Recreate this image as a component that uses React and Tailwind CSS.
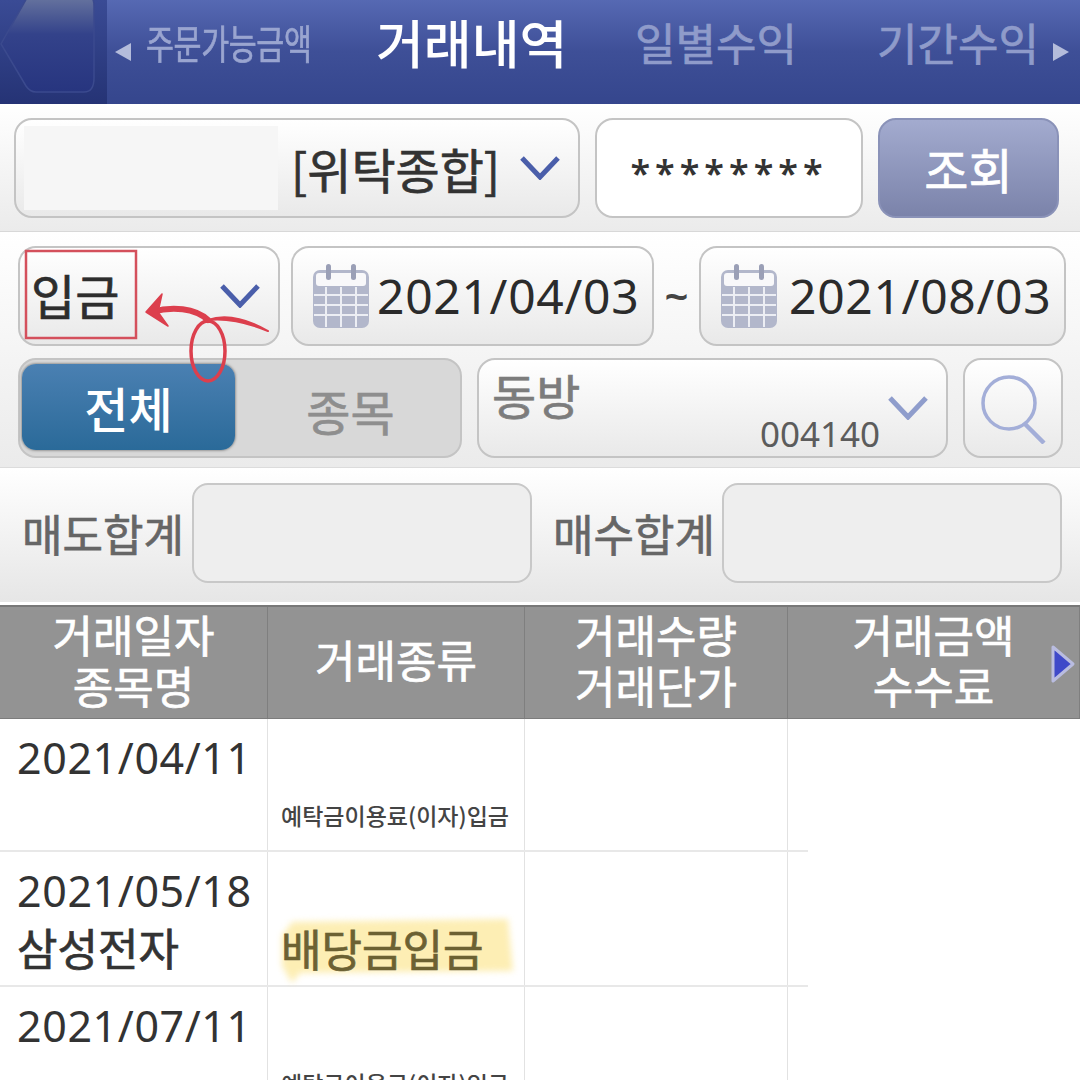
import { useId } from "react";

const KR = "font-['Noto_Sans_CJK_KR','Noto_Sans',sans-serif]";
const NUM = "font-['Noto_Sans','Noto_Sans_CJK_KR',sans-serif]";
const THICK = "[-webkit-text-stroke-width:0.7px]";

const box =
  "rounded-[18px] border-2 border-[#c4c4c4] bg-gradient-to-b from-white to-[#e9e9e9]";

const Chevron = ({ color = "#4a5eaa", w = 40, h = 24 }) => (
  <svg width={w} height={h} viewBox="0 0 40 24" fill="none" className="shrink-0">
    <path d="M2 2 L20 21 L38 2" stroke={color} strokeWidth="5" />
  </svg>
);

const Calendar = () => (
  <svg width="58" height="66" viewBox="0 0 58 66" className="shrink-0">
    <rect x="1" y="7" width="56" height="58" rx="7" fill="#b2b7cb" />
    <rect x="4" y="10" width="50" height="13" rx="3" fill="#f8f8fa" />
    <rect x="14" y="1" width="5" height="16" rx="2.5" fill="#9a9fb6" />
    <rect x="39" y="1" width="5" height="16" rx="2.5" fill="#9a9fb6" />
    <path
      d="M2 32 H56 M2 42 H56 M2 52 H56 M14 24 V64 M29 24 V64 M44 24 V64"
      stroke="#eceef4"
      strokeWidth="2"
    />
  </svg>
);

const Search = () => (
  <svg width="68" height="72" viewBox="0 0 68 72" fill="none">
    <circle cx="30" cy="31" r="26" stroke="#a3aed8" strokeWidth="3.5" />
    <path d="M46 52 L65 71" stroke="#a3aed8" strokeWidth="4.5" />
  </svg>
);

const BackButton = () => {
  const id = useId();
  return (
    <div className="w-[107px] h-full shrink-0 bg-gradient-to-b from-[#3a4b95] to-[#253375]">
      <svg width="107" height="104" viewBox="0 0 107 104">
        <defs>
          <linearGradient id={id} x1="0" y1="0" x2="0" y2="1">
            <stop offset="0" stopColor="#68759f" />
            <stop offset="0.4" stopColor="#33428a" />
            <stop offset="1" stopColor="#27357f" />
          </linearGradient>
        </defs>
        <path
          d="M28 -4 H88 Q94 -4 94 6 V78 Q94 92 84 92 H36 Q30 92 26 86 L1 44 Z"
          fill={`url(#${id})`}
          stroke="#3b4a8e"
          strokeWidth="1.5"
        />
      </svg>
    </div>
  );
};

const Header = () => (
  <div
    className={`${KR} h-[104px] flex items-center bg-gradient-to-b from-[#5669b3] via-[#3e4f97] to-[#35468d] overflow-hidden`}
  >
    <BackButton />
    <span className="ml-[8px] w-0 h-0 border-y-[9px] border-y-transparent border-r-[16px] border-r-[#b4bcdb]" />
    <span className={`${THICK} ml-[15px] w-[166px] pb-[20px] whitespace-nowrap text-[40px] leading-none text-[#9aa5d0] origin-left scale-x-[0.76] -tracking-[0.5px]`}>
      주문가능금액
    </span>
    <span className="ml-[64px] w-[187px] pb-[20px] whitespace-nowrap text-[52px] leading-none font-medium text-white">
      거래내역
    </span>
    <span className={`${THICK} ml-[72px] w-[159px] pb-[20px] whitespace-nowrap text-[44px] leading-none text-[#8f9bca]`}>
      일별수익
    </span>
    <span className={`${THICK} ml-[83px] w-[160px] pb-[20px] whitespace-nowrap text-[44px] leading-none text-[#8f9bca]`}>
      기간수익
    </span>
    <span className="ml-[16px] w-0 h-0 border-y-[9px] border-y-transparent border-l-[16px] border-l-[#b4bcdb]" />
  </div>
);

const AccountRow = () => (
  <div
    className={`${KR} h-[128px] pt-[14px] pl-[14px] flex gap-[15px] bg-gradient-to-b from-white to-[#ebebeb] border-b border-[#d8d8d8]`}
  >
    <div className={`${box} w-[566px] h-[100px] flex items-center pl-[8px]`}>
      <div className="w-[254px] h-[84px] bg-[#f6f6f6]" />
      <span className={`${THICK} ml-[13px] text-[48px] leading-none text-[#333] whitespace-nowrap`}>
        [위탁종합]
      </span>
      <span className="ml-[20px]">
        <Chevron />
      </span>
    </div>
    <div className="w-[268px] h-[100px] rounded-[18px] border-2 border-[#c4c4c4] bg-white flex items-center justify-center">
      <span className={`${NUM} text-[36px] font-semibold leading-none tracking-[5px] text-[#333] pt-[10px]`}>
        ********
      </span>
    </div>
    <div className="w-[181px] h-[100px] rounded-[18px] border-2 border-[#8a92b8] bg-gradient-to-b from-[#a3abcf] to-[#7b83aa] flex items-center justify-center">
      <span className={`${THICK} text-[48px] leading-none text-white`}>조회</span>
    </div>
  </div>
);

const DateBox = ({ width, value, textClass }) => (
  <div className={`${box} h-[100px] flex items-center pl-[19px] shrink-0`} style={{ width }}>
    <Calendar />
    <span className={`${NUM} ${textClass} text-[48px] leading-none text-[#2b2b2b] tracking-[0.7px]`}>
      {value}
    </span>
  </div>
);

const FilterRows = () => (
  <div className={`${KR} h-[236px] pt-[14px] bg-gradient-to-b from-white to-[#ebebeb] border-b border-[#dcdcdc]`}>
    <div className="flex items-center pl-[18px]">
      <div className={`${box} w-[262px] h-[100px] flex items-center justify-between pl-[11px] pr-[18px]`}>
        <span className={`${THICK} text-[48px] leading-none text-[#2d2d2d] -mt-[4px]`}>입금</span>
        <Chevron />
      </div>
      <div className="ml-[11px]">
        <DateBox width={363} value="2021/04/03" textClass="ml-[7px]" />
      </div>
      <span className={`${NUM} w-[45px] text-center text-[42px] font-semibold leading-none text-[#444]`}>~</span>
      <DateBox width={367} value="2021/08/03" textClass="ml-[11px]" />
    </div>
    <div className="flex mt-[12px] pl-[18px]">
      <div className="w-[444px] h-[100px] rounded-[18px] border-2 border-[#c4c4c4] bg-[#d8d8d8] pl-[2px] pt-[4px] flex">
        <div className="w-[213px] h-[86px] rounded-[14px] bg-gradient-to-b from-[#4a80b2] to-[#2a6a99] shadow-[0_0_3px_#555] flex items-center justify-center">
          <span className="text-[48px] leading-none font-medium text-white">전체</span>
        </div>
        <div className="flex-1 flex items-center justify-center pl-[6px]">
          <span className={`${THICK} text-[48px] leading-none text-[#8e8e8e]`}>종목</span>
        </div>
      </div>
      <div className={`${box} ml-[15px] w-[471px] h-[100px] relative`}>
        <div className={`${THICK} pl-[13px] pt-[10px] text-[48px] leading-none text-[#7c7c7c]`}>동방</div>
        <div className="flex items-start justify-end pr-[18px] mt-[-22px]">
          <span className={`${NUM} text-[35px] leading-none text-[#5c5c5c] mt-[20px] mr-[8px]`}>004140</span>
          <Chevron color="#8f9dcc" />
        </div>
      </div>
      <div className={`${box} ml-[15px] w-[100px] h-[100px] flex items-center justify-center`}>
        <Search />
      </div>
    </div>
  </div>
);

const SumRow = () => (
  <div className={`${KR} h-[134px] pb-[4px] flex items-center bg-gradient-to-b from-white to-[#e6e6e6]`}>
    <span className={`${THICK} ml-[22px] w-[170px] text-[44px] leading-none text-[#666] whitespace-nowrap`}>
      매도합계
    </span>
    <div className="w-[340px] h-[100px] rounded-[16px] border-2 border-[#c8c8c8] bg-[#eeeeee]" />
    <span className={`${THICK} ml-[21px] w-[169px] text-[44px] leading-none text-[#666] whitespace-nowrap`}>
      매수합계
    </span>
    <div className="w-[340px] h-[100px] rounded-[16px] border-2 border-[#c8c8c8] bg-[#eeeeee]" />
  </div>
);

const HeadCell = ({ lines, width, children }) => (
  <div
    className={`${THICK} h-full flex flex-col items-center justify-center border-r border-[#7f7f7f] text-[44px] leading-[51px] text-white relative shrink-0 pb-[6px]`}
    style={{ width }}
  >
    {lines.map((line) => (
      <span key={line}>{line}</span>
    ))}
    {children}
  </div>
);

const TableHead = () => (
  <div className={`${KR} h-[114px] mt-[3px] flex bg-[#939393] border-t-2 border-[#777] border-b border-b-[#7c7c7c]`}>
    <HeadCell lines={["거래일자", "종목명"]} width={268} />
    <HeadCell lines={["거래종류"]} width={257} />
    <HeadCell lines={["거래수량", "거래단가"]} width={263} />
    <HeadCell lines={["거래금액", "수수료"]} width={292}>
      <svg width="26" height="40" viewBox="0 0 26 40" className="absolute right-[3px] top-[37px]">
        <path d="M3 3 L23 20 L3 37 Z" fill="#3f49c9" stroke="#b9bce0" strokeWidth="3" strokeLinejoin="round" />
      </svg>
    </HeadCell>
  </div>
);

const rows = [
  { date: "2021/04/11", kind: "예탁금이용료(이자)입금", h: 133 },
  { date: "2021/05/18", name: "삼성전자", kind: "배당금입금", big: true, h: 135 },
  { date: "2021/07/11", kind: "예탁금이용료(이자)입금", h: 134 },
];

const Row = ({ date, name, kind, big, h }) => (
  <div className="flex w-[808px] border-b-2 border-[#e8e8e8] shrink-0" style={{ height: h }}>
    <div className="w-[268px] shrink-0 border-r border-[#e2e2e2] pl-[17px] pt-[12px]">
      <div className={`${NUM} text-[43px] leading-[54px] text-[#333] tracking-[0.6px]`}>{date}</div>
      {name && <div className={`${KR} ${THICK} text-[44px] leading-[58px] text-[#333] whitespace-nowrap`}>{name}</div>}
    </div>
    <div className="w-[257px] shrink-0 border-r border-[#e2e2e2] relative">
      {big ? (
        <>
          <svg width="257" height="133" viewBox="0 0 257 133" className="absolute left-0 top-0 blur-[3px]">
            <path d="M24 70 L240 67 L245 119 L32 121 L24 131 L14 114 L14 84 Z" fill="#fdeeb4" />
          </svg>
          <span className={`${KR} ${THICK} absolute left-[13px] top-[66px] text-[44px] leading-[60px] text-[#6c6132] whitespace-nowrap`}>
            {kind}
          </span>
        </>
      ) : (
        <span className={`${KR} absolute left-[13px] top-[80px] text-[23px] leading-[32px] font-medium text-[#444] whitespace-nowrap`}>
          {kind}
        </span>
      )}
    </div>
    <div className="w-[263px] shrink-0 border-r border-[#e2e2e2]" />
  </div>
);

// red arrow and loop drawn over the screenshot
const Annotation = () => (
  <svg width="1080" height="400" viewBox="0 0 1080 400" fill="none" className="absolute left-0 top-0 pointer-events-none">
    <rect x="26" y="251" width="110" height="87" stroke="#d4505c" strokeWidth="2.5" />
    <path d="M268 331 C245 318 225 314 208 320 C226 318 246 322 268 331 Z" fill="#dc3f4d" stroke="#dc3f4d" strokeWidth="2" strokeLinejoin="round" />
    <ellipse cx="208" cy="351" rx="17" ry="30" stroke="#dc3f4d" strokeWidth="3.5" />
    <path d="M208 320 C195 308 172 306 152 312" stroke="#dc3f4d" strokeWidth="6" strokeLinecap="round" />
    <path d="M162 294 L146 312 L168 326 L158 312 Z" fill="#dc3f4d" stroke="#dc3f4d" strokeWidth="1.5" strokeLinejoin="round" />
  </svg>
);

export default function App() {
  return (
    <div className="relative w-[1080px] h-[1080px] overflow-hidden bg-white">
      <Header />
      <AccountRow />
      <FilterRows />
      <SumRow />
      <TableHead />
      <div className="flex flex-col">
        {rows.map((r) => (
          <Row key={r.date} {...r} />
        ))}
      </div>
      <Annotation />
    </div>
  );
}
